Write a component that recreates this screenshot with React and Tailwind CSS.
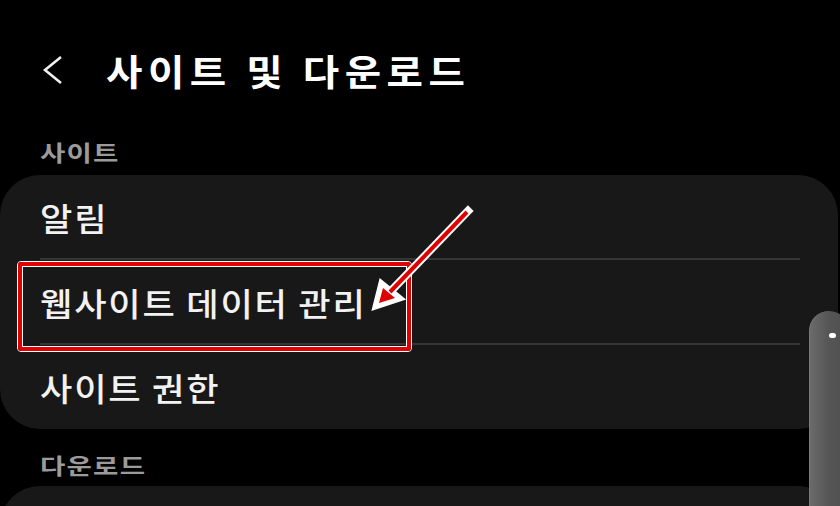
import React from "react";

const font = { fontFamily: '"Noto Sans CJK KR", "Noto Sans", sans-serif' };

function Row({ children, divider, h = "h-[85px]" }) {
  return (
    <div className="pl-[40px] pr-[38px]">
      <div className={`${h} flex items-center ${divider ? "border-b-2 border-[#353535]" : ""}`}>
        <span className="inline-block origin-left scale-x-[1.1] text-[32px] font-medium tracking-[1.6px] text-[#f2f2f2] leading-none">
          {children}
        </span>
      </div>
    </div>
  );
}

function SectionHeader({ children, cls }) {
  return (
    <div className={`pl-[40px] ${cls}`}>
      <span className="inline-block origin-left scale-x-[1.25] text-[22px] font-bold tracking-[1px] text-[#9b9b9b] leading-none">
        {children}
      </span>
    </div>
  );
}

export default function App() {
  return (
    <div className="relative w-[840px] h-[506px] bg-black overflow-hidden" style={font}>
      <div className="flex items-center h-[60px] mt-[40px] pl-[40px]">
        <svg width="26" height="30" viewBox="0 0 26 30" className="mr-[40px] shrink-0">
          <path d="M21 2 L5 15 L21 28" fill="none" stroke="#f0f0f0" strokeWidth="2.6" />
        </svg>
        <h1 className="inline-block origin-left scale-x-[1.1] text-[36px] font-bold tracking-[5px] text-white leading-none whitespace-nowrap">
          사이트 및 다운로드
        </h1>
      </div>
      <SectionHeader cls="pt-[40px] h-[75px]">사이트</SectionHeader>
      <div className="w-[838px] bg-[#181818] rounded-[40px] flex flex-col">
        <Row divider>알림</Row>
        <Row divider>웹사이트 데이터 관리</Row>
        <Row h="h-[84px]">사이트 권한</Row>
      </div>
      <SectionHeader cls="pt-[24px] h-[57px]">다운로드</SectionHeader>
      <div className="w-[838px] h-[120px] bg-[#181818] rounded-[40px]" />

      {/* annotation box */}
      <div className="absolute left-[17px] top-[261px] w-[395px] h-[91px] rounded-[4px] border border-white">
        <div className="w-full h-full rounded-[3px] border-[4px] border-[#e00000]">
          <div className="w-full h-full border border-white" />
        </div>
      </div>
      {/* annotation arrow */}
      <svg className="absolute left-0 top-0" width="840" height="506" viewBox="0 0 840 506">
        <g stroke="white" strokeWidth="8" strokeLinecap="square" fill="white" strokeLinejoin="miter">
          <line x1="468" y1="211" x2="390" y2="292" />
          <polygon points="377,305 382,285 398,298" />
        </g>
        <g stroke="#e00000" strokeWidth="4" strokeLinecap="butt" fill="#e00000">
          <line x1="467" y1="212" x2="390" y2="292" />
          <polygon points="379,303 383,288 395,298" stroke="none" />
        </g>
      </svg>
      {/* scroll handle */}
      <div className="absolute left-[809px] top-[311px] w-[40px] h-[220px] rounded-t-[20px] bg-gradient-to-r from-[#6b6b6b] via-[#555555] to-[#4f4f4f] border-l border-[#7a7a7a]">
        <div className="absolute left-[19px] top-[22px] w-[7px] h-[5px] rounded-full bg-white" />
      </div>
    </div>
  );
}
